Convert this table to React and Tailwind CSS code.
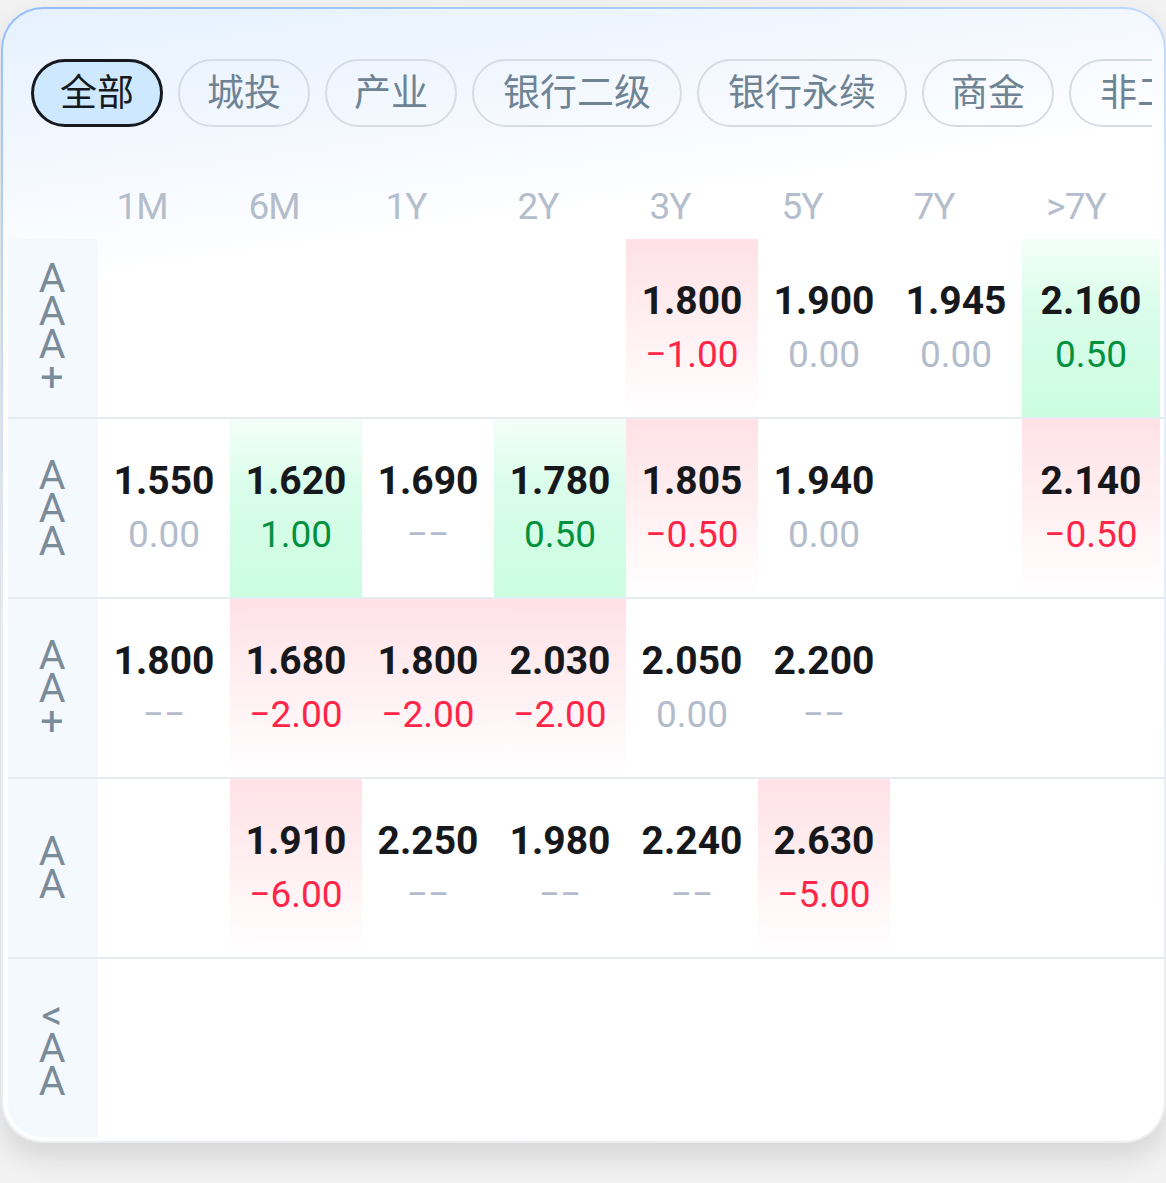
import React from 'react'

const TABS = ['全部', '城投', '产业', '银行二级', '银行永续', '商金', '非二级']
const TERMS = ['1M', '6M', '1Y', '2Y', '3Y', '5Y', '7Y', '>7Y']

const ROWS = [
  {
    label: ['A', 'A', 'A', '+'],
    cells: [null, null, null, null, ['1.800', '-1.00'], ['1.900', '0.00'], ['1.945', '0.00'], ['2.160', '0.50']],
  },
  {
    label: ['A', 'A', 'A'],
    cells: [['1.550', '0.00'], ['1.620', '1.00'], ['1.690', null], ['1.780', '0.50'], ['1.805', '-0.50'], ['1.940', '0.00'], null, ['2.140', '-0.50']],
  },
  {
    label: ['A', 'A', '+'],
    cells: [['1.800', null], ['1.680', '-2.00'], ['1.800', '-2.00'], ['2.030', '-2.00'], ['2.050', '0.00'], ['2.200', null], null, null],
  },
  {
    label: ['A', 'A'],
    cells: [null, ['1.910', '-6.00'], ['2.250', null], ['1.980', null], ['2.240', null], ['2.630', '-5.00'], null, null],
  },
  {
    label: ['<', 'A', 'A'],
    cells: [null, null, null, null, null, null, null, null],
  },
]

function Cell({ data, last }) {
  const w = last ? 'w-[138px]' : 'w-[132px]'
  if (!data) return <div className={`${w} shrink-0`} />
  const [v, c] = data
  const n = c === null ? 0 : parseFloat(c)
  let bg = ''
  let tone = 'text-[#b3bccb]'
  if (n < 0) {
    bg = 'bg-linear-to-b from-[#ffe1e6] to-white'
    tone = 'text-[#ff2548]'
  }
  if (n > 0) {
    bg = 'bg-linear-to-b from-[#f3fff8] via-[#d9fdea] via-40% to-[#cbfde1]'
    tone = 'text-[#03913f]'
  }
  return (
    <div className={`${w} shrink-0 flex flex-col items-center justify-center ${bg}`}>
      <div className="text-[39px] font-bold leading-[53px] text-[#16181c]">{v}</div>
      <div className={`text-[37px] font-normal leading-[53px] ${tone}`}>
        {c === null ? '−−' : c.replace('-', '−')}
      </div>
    </div>
  )
}

export default function App() {
  return (
    <div className="min-h-screen bg-[#f2f2f2] pt-[7px] pl-[1px] font-['Roboto','Noto_Sans_CJK_SC',sans-serif]">
      <div className="w-[1165px] h-[1136px] rounded-[42px] p-[2px] bg-[linear-gradient(165deg,#93bcff_0%,#b8d4ff_18%,#e4edfa_42%,#eeeeee_100%)] shadow-[0_14px_28px_rgba(0,0,0,0.12)]">
        <div className="h-full rounded-[40px] overflow-hidden bg-[linear-gradient(172deg,#e5f1ff_0%,#f5f9ff_14%,#fcfdff_20%,#ffffff_22%)] flex flex-col">
          {/* tabs */}
          <div className="pt-[50px] pl-[28px]">
            <div className="w-[1121px] overflow-hidden flex gap-[15px]">
              {TABS.map((t, i) => (
                <div
                  key={t}
                  className={
                    i === 0
                      ? 'shrink-0 h-[68px] px-[26px] rounded-full border-[3px] border-[#16191d] bg-[#cde8ff] text-[#16191d] flex items-center text-[37px] leading-none'
                      : `shrink-0 h-[68px] ${t.length > 2 ? 'px-[29px]' : 'px-[27px]'} rounded-full border-2 border-[#d5dce4] text-[#6f8394] flex items-center text-[37px] leading-none`
                  }
                >
                  {t}
                </div>
              ))}
            </div>
          </div>

          {/* term header */}
          <div className="mt-[48px] h-[64px] pl-[5px] flex items-center">
            <div className="w-[68px] shrink-0" />
            {TERMS.map((t, i) => (
              <div
                key={t}
                className={`${i === TERMS.length - 1 ? 'w-[152px]' : 'w-[132px]'} shrink-0 text-center text-[37px] tracking-[-1px] text-[#b4bdcc]`}
              >
                {t}
              </div>
            ))}
          </div>

          {/* grid */}
          <div className="pl-[5px]">
            {ROWS.map((row, ri) => {
              const lastRow = ri === ROWS.length - 1
              return (
                <div
                  key={ri}
                  className={`flex h-[178px] box-content ${lastRow ? '' : 'border-b-2 border-[#e6ebf0]'}`}
                >
                  <div
                    className={`w-[90px] shrink-0 bg-[#f4f9ff] flex flex-col items-center justify-center pr-[2px] text-[41px] leading-[33px] text-[#7a8b9a] ${lastRow ? 'rounded-bl-[34px]' : ''}`}
                  >
                    {row.label.map((ch, k) => (
                      <span key={k}>{ch}</span>
                    ))}
                  </div>
                  {row.cells.map((c, ci) => (
                    <Cell key={ci} data={c} last={ci === row.cells.length - 1} />
                  ))}
                  <div className="flex-1" />
                </div>
              )
            })}
          </div>
        </div>
      </div>
    </div>
  )
}
